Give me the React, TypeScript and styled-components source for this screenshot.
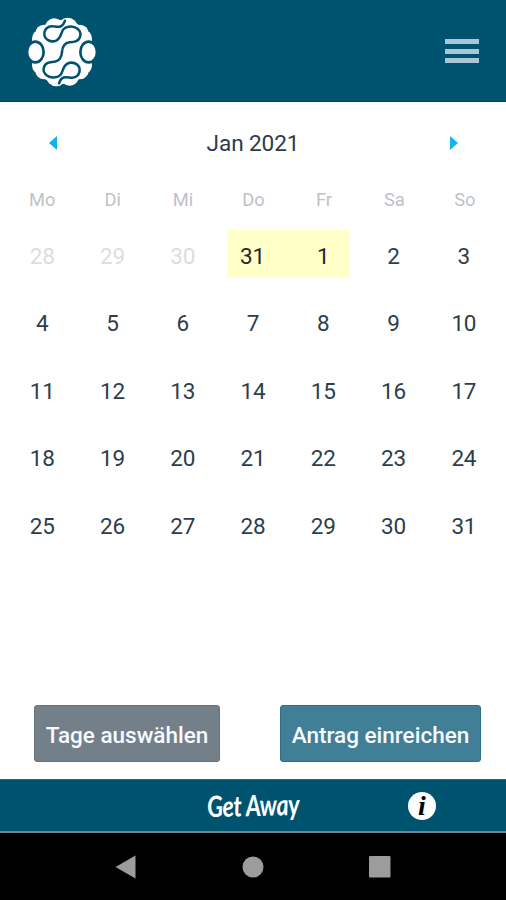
import React from 'react';
import styled, { createGlobalStyle } from 'styled-components';

const GlobalStyle = createGlobalStyle`
  * { box-sizing: border-box; }
  body { margin: 0; background: #fff; }
`;

const Screen = styled.div`
  display: flex;
  flex-direction: column;
  width: 506px;
  height: 900px;
  background: #fff;
  font-family: Roboto, "Liberation Sans", sans-serif;
  overflow: hidden;
`;

const Header = styled.header`
  display: flex;
  align-items: center;
  justify-content: space-between;
  height: 102px;
  padding: 0 27px 0 20px;
  background: #00536f;
  border-bottom: 1px solid #0b4156;
`;

const LogoMark = styled.svg`
  width: 84px;
  height: 84px;
  margin-top: 2px;
`;

const MenuButton = styled.button`
  display: flex;
  flex-direction: column;
  gap: 4.5px;
  width: 34px;
  padding: 0;
  margin-top: 1px;
  border: 0;
  background: none;
`;

const MenuBar = styled.span`
  height: 5px;
  background: #a9c6d8;
`;

const MonthBar = styled.div`
  display: flex;
  align-items: center;
  justify-content: space-between;
  height: 82px;
  padding: 0 48px;
`;

const MonthTitle = styled.h1`
  margin: 1px 0 0;
  color: #2d3c4b;
  font-size: 22.6px;
  font-weight: 400;
  letter-spacing: -0.1px;
`;

const ArrowButton = styled.button`
  display: flex;
  padding: 0 0 1px;
  border: 0;
  background: none;
`;

const WeekRow = styled.div`
  display: grid;
  grid-template-columns: repeat(7, 1fr);
  padding: 0 6px 0 7px;
  height: 30px;
  align-items: center;
`;

const Weekday = styled.span`
  color: #bcc2c8;
  font-size: 18.3px;
  text-align: center;
`;

const DayGrid = styled.div`
  display: grid;
  grid-template-columns: repeat(7, 1fr);
  grid-auto-rows: 48px;
  row-gap: 19.4px;
  padding: 16px 7px 0;
`;

type DayKind = 'normal' | 'faded' | 'rangeStart' | 'rangeEnd';

const Day = styled.span<{ $kind: DayKind }>`
  display: flex;
  align-items: center;
  justify-content: center;
  padding-top: 4px;
  color: ${({ $kind }) => ($kind === 'faded' ? '#d9dee2' : $kind === 'normal' ? '#2d3e4b' : '#25272a')};
  background: ${({ $kind }) => ($kind.startsWith('range') ? '#ffffc7' : 'transparent')};
  margin-left: ${({ $kind }) => ($kind === 'rangeStart' ? '9px' : '0')};
  padding-right: ${({ $kind }) => ($kind === 'rangeStart' ? '10px' : '0')};
  margin-right: ${({ $kind }) => ($kind === 'rangeEnd' ? '8px' : '0')};
  padding-left: ${({ $kind }) => ($kind === 'rangeEnd' ? '8px' : '0')};
  font-size: 22.5px;
  letter-spacing: -0.2px;
`;

const Actions = styled.div`
  display: flex;
  justify-content: space-between;
  margin-top: auto;
  padding: 0 25px 17px 34px;
`;

const ActionButton = styled.button<{ $primary?: boolean }>`
  width: ${({ $primary }) => ($primary ? 201 : 186)}px;
  height: 57px;
  padding: 3px 0 0;
  border: 1px solid ${({ $primary }) => ($primary ? '#2c7188' : '#67747d')};
  border-radius: 3px;
  background: ${({ $primary }) => ($primary ? '#407f96' : '#748089')};
  color: #f7fbff;
  font: 500 22.5px Roboto, sans-serif;
  white-space: nowrap;
`;

const Footer = styled.footer`
  display: grid;
  grid-template-columns: 1fr 100px 1fr;
  align-items: center;
  height: 54px;
  background: #00536f;
  border-top: 1px solid #35667a;
  border-bottom: 2px solid #71858f;
`;

const Wordmark = styled.span`
  grid-column: 2;
  justify-self: center;
  color: #fff;
  font: italic 700 29px Lato, sans-serif;
  letter-spacing: -0.5px;
  white-space: nowrap;
  transform: translateY(-1px) scaleX(0.81) skewX(4deg) rotate(-1deg);
`;

const InfoBadge = styled.span`
  display: flex;
  align-items: center;
  justify-content: center;
  width: 28px;
  height: 28px;
  margin: 1px 0 0 105px;
  border-radius: 50%;
  background: #fff;
  color: #050505;
  font: italic 700 28px "Liberation Serif", serif;
`;

const SystemNav = styled.nav`
  display: flex;
  justify-content: space-between;
  align-items: center;
  height: 67px;
  padding: 0 115px;
  background: #000;
`;

const weekdays = ['Mo', 'Di', 'Mi', 'Do', 'Fr', 'Sa', 'So'];
const days = [28, 29, 30, 31, ...Array.from({ length: 31 }, (_, i) => i + 1)];

const kindOf = (index: number): DayKind =>
  index < 3 ? 'faded' : index === 3 ? 'rangeStart' : index === 4 ? 'rangeEnd' : 'normal';

const Ribbon = () => (
  <path d="M135 32 C127 57 111 50 99 49 C83 47 72 59 73 74 C75 90 94 99 110 91 C130 80 118 54 146 50 C167 47 184 61 181 77 C178 95 161 96 149 97 C131 99 127 111 126 126" />
);

const Logo = () => (
  <LogoMark viewBox="0 0 252 252" role="img" aria-label="Logo">
    <g fill="#fff">
      <circle cx="126" cy="126" r="96" />
      <circle cx="103" cy="53" r="28" />
      <circle cx="143" cy="54" r="31" />
      <circle cx="72" cy="70" r="26" />
      <circle cx="63" cy="86" r="27" />
      <circle cx="180" cy="70" r="26" />
      <circle cx="189" cy="86" r="27" />
      <circle cx="72" cy="182" r="26" />
      <circle cx="63" cy="166" r="27" />
      <circle cx="180" cy="182" r="26" />
      <circle cx="189" cy="166" r="27" />
      <circle cx="109" cy="198" r="31" />
      <circle cx="149" cy="199" r="28" />
    </g>
    <g fill="#fff" stroke="#00536f" strokeWidth="8">
      <ellipse cx="46" cy="126" rx="25" ry="31" />
      <ellipse cx="206" cy="126" rx="25" ry="31" />
    </g>
    <g fill="none" stroke="#00536f" strokeWidth="7.5" strokeLinecap="round">
      <Ribbon />
      <g transform="rotate(180 126 126)"><Ribbon /></g>
    </g>
  </LogoMark>
);

export default function App() {
  return (
    <Screen>
      <GlobalStyle />
      <Header>
        <Logo />
        <MenuButton aria-label="Menü">
          <MenuBar /><MenuBar /><MenuBar />
        </MenuButton>
      </Header>
      <MonthBar>
        <ArrowButton aria-label="Zurück">
          <svg width="9" height="14"><path d="M9 0V14L1 7Z" fill="#12b2ee" /></svg>
        </ArrowButton>
        <MonthTitle>Jan 2021</MonthTitle>
        <ArrowButton aria-label="Weiter">
          <svg width="9" height="14"><path d="M1 0V14L9 7Z" fill="#12b2ee" /></svg>
        </ArrowButton>
      </MonthBar>
      <WeekRow>
        {weekdays.map((name) => <Weekday key={name}>{name}</Weekday>)}
      </WeekRow>
      <DayGrid>
        {days.map((day, i) => <Day key={i} $kind={kindOf(i)}>{day}</Day>)}
      </DayGrid>
      <Actions>
        <ActionButton>Tage auswählen</ActionButton>
        <ActionButton $primary>Antrag einreichen</ActionButton>
      </Actions>
      <Footer>
        <Wordmark>Get Away</Wordmark>
        <InfoBadge>i</InfoBadge>
      </Footer>
      <SystemNav>
        <svg width="22" height="24"><path d="M20.500 0.500V23.500L0.500 12Z" fill="#9c9c9c" /></svg>
        <svg width="22" height="22"><circle cx="11" cy="11" r="10.500" fill="#9c9c9c" /></svg>
        <svg width="22" height="22"><rect width="21.500" height="21.500" rx="1" fill="#9c9c9c" /></svg>
      </SystemNav>
    </Screen>
  );
}
